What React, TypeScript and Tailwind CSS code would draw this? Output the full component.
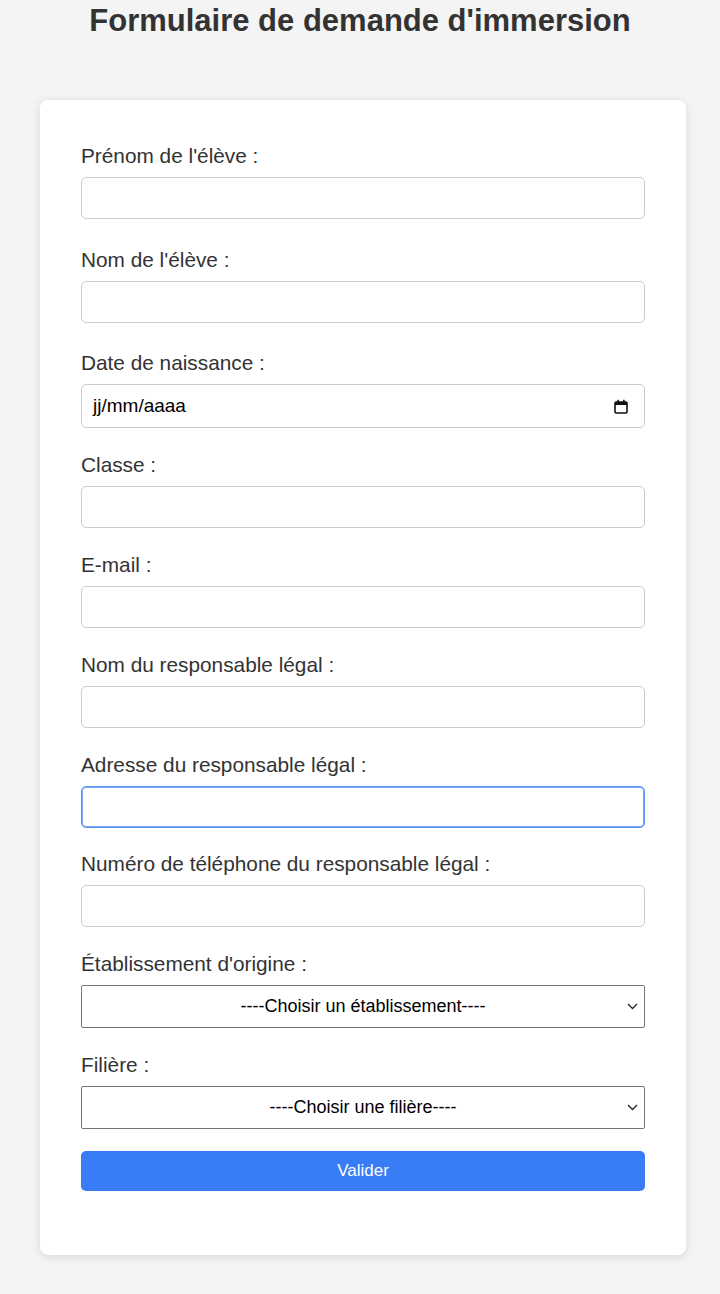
import React from 'react';

type Field = {
  label: string;
  kind: 'text' | 'date' | 'focus' | 'select';
  placeholder?: string;
  extra?: string;
};

const fields: Field[] = [
  { label: "Prénom de l'élève :", kind: 'text', extra: 'mb-[30px]' },
  { label: "Nom de l'élève :", kind: 'text', extra: 'mb-[29px]' },
  { label: 'Date de naissance :', kind: 'date', extra: 'mb-[26px]' },
  { label: 'Classe :', kind: 'text', extra: 'mb-[26px]' },
  { label: 'E-mail :', kind: 'text', extra: 'mb-[26px]' },
  { label: 'Nom du responsable légal :', kind: 'text', extra: 'mb-[26px]' },
  { label: 'Adresse du responsable légal :', kind: 'focus', extra: 'mb-[25px]' },
  { label: 'Numéro de téléphone du responsable légal :', kind: 'text', extra: 'mb-[26px]' },
  { label: "Établissement d'origine :", kind: 'select', placeholder: '----Choisir un établissement----', extra: 'mb-[26px]' },
  { label: 'Filière :', kind: 'select', placeholder: '----Choisir une filière----', extra: 'mb-[22px]' },
];

const CalendarIcon = () => (
  <svg width="14" height="15" viewBox="0 0 14 15" fill="none">
    <rect x="1" y="3" width="12" height="11" rx="1.2" stroke="#111" strokeWidth="1.6" />
    <rect x="1" y="3" width="12" height="3" fill="#111" />
    <rect x="3.3" y="0.8" width="1.6" height="3" fill="#111" />
    <rect x="9.1" y="0.8" width="1.6" height="3" fill="#111" />
  </svg>
);

const Chevron = () => (
  <svg width="11" height="7" viewBox="0 0 11 7" fill="none">
    <path d="M1 1l4.5 4.5L10 1" stroke="#222" strokeWidth="1.3" />
  </svg>
);

const Control: React.FC<{ field: Field }> = ({ field }) => {
  const inputClass = 'block w-full h-[42px] px-[10px] rounded-[5px] border bg-white text-[18px] text-black outline-none';

  if (field.kind === 'date') {
    return (
      <div className="flex items-center justify-between w-full h-[44px] pl-[11px] pr-[16px] rounded-[5px] border border-[#cccccc] bg-white">
        <span className="text-[19px] text-black">jj/mm/aaaa</span>
        <CalendarIcon />
      </div>
    );
  }

  if (field.kind === 'select') {
    return (
      <div className="relative">
        <select className="block w-full h-[43px] appearance-none rounded-[2px] border border-[#767676] bg-white text-center text-[18px] text-black outline-none">
          <option>{field.placeholder}</option>
        </select>
        <span className="pointer-events-none absolute right-[7px] top-[18px]">
          <Chevron />
        </span>
      </div>
    );
  }

  if (field.kind === 'focus') {
    return <input type="text" className={`${inputClass} border-[#5d94f2] shadow-[inset_0_0_0_1px_#7aa7f5]`} />;
  }

  return <input type="text" className={`${inputClass} border-[#cccccc]`} />;
};

export default function App() {
  return (
    <div className="min-h-screen bg-[#f4f4f4] pb-[40px] text-[#333333]" style={{ fontFamily: '"Liberation Sans", Arial, sans-serif' }}>
      <h1 className="pt-[2px] text-center text-[31px] leading-[37px] font-bold text-[#333333]">
        Formulaire de demande d'immersion
      </h1>

      <form
        className="ml-[40px] mt-[61px] w-[646px] rounded-[8px] bg-white px-[41px] pt-[45px] pb-[64px] shadow-[0_2px_10px_rgba(0,0,0,0.12)]"
        onSubmit={(e) => e.preventDefault()}
      >
        {fields.map((f) => (
          <div key={f.label} className={f.extra}>
            <label className="mb-[10px] block text-[20.8px] leading-[22px] text-[#333333]">{f.label}</label>
            <Control field={f} />
          </div>
        ))}

        <button
          type="submit"
          className="block h-[40px] w-full rounded-[5px] bg-[#387df5] text-[17px] text-white"
        >
          Valider
        </button>
      </form>
    </div>
  );
}
